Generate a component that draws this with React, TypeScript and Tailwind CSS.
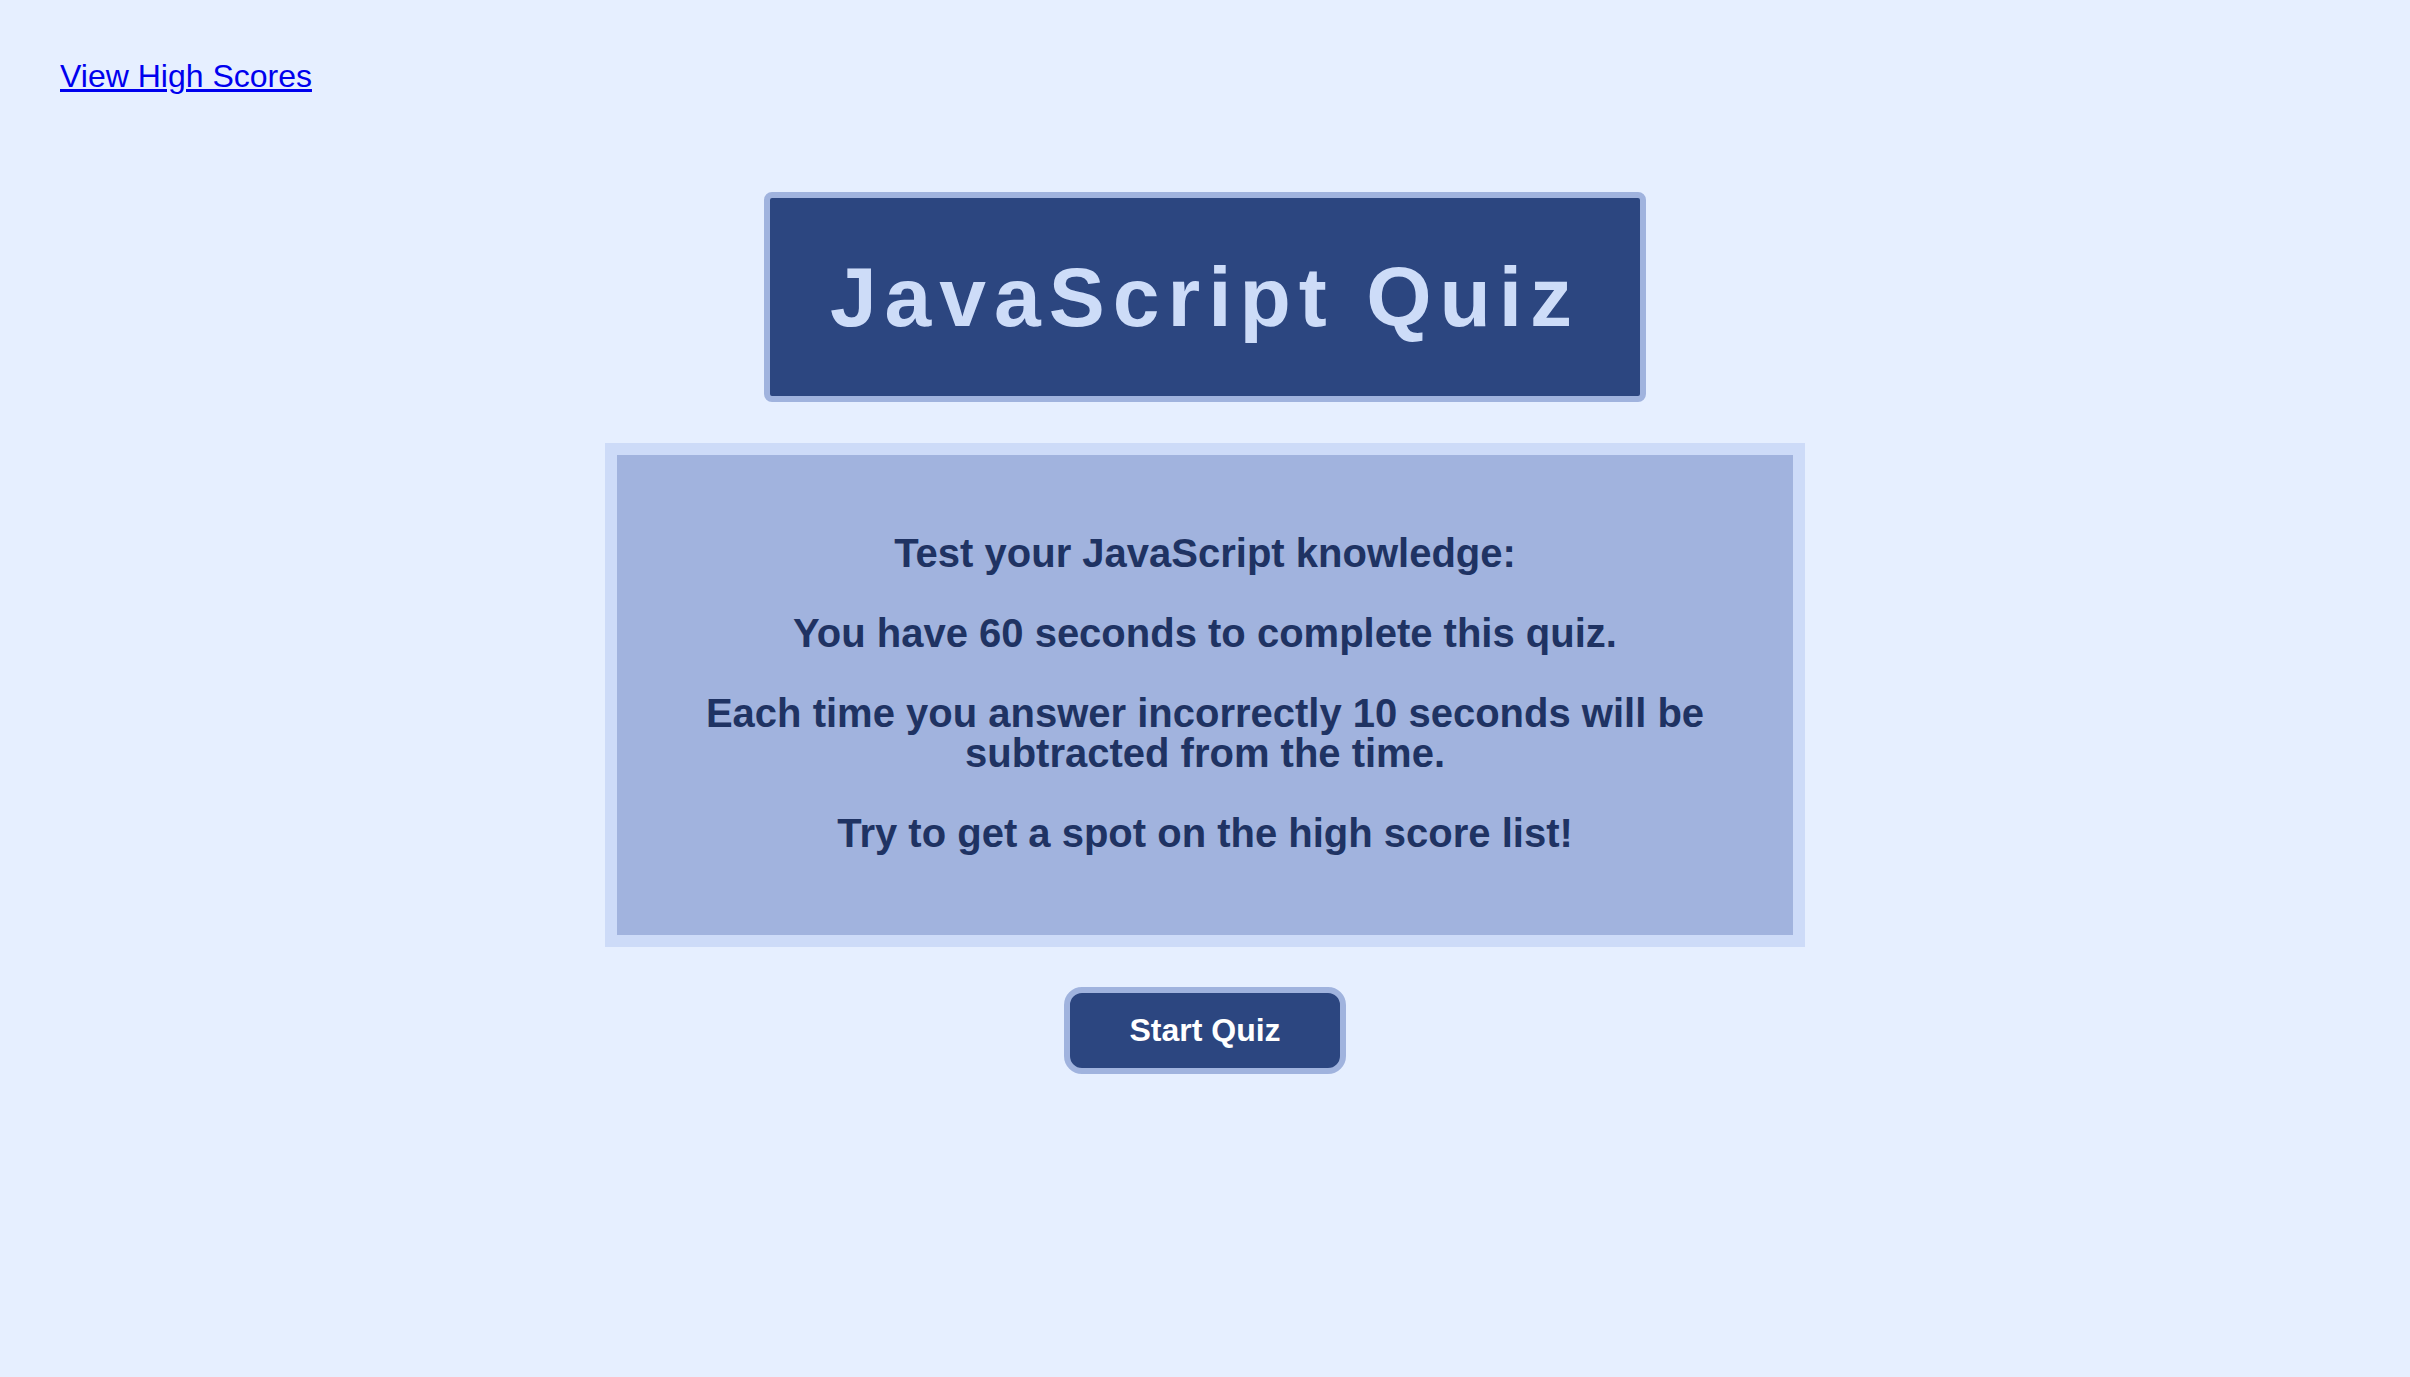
const paragraphs = [
  'Test your JavaScript knowledge:',
  'You have 60 seconds to complete this quiz.',
  'Each time you answer incorrectly 10 seconds will be subtracted from the time.',
  'Try to get a spot on the high score list!',
];

export default function App() {
  return (
    <div className="min-h-screen bg-[#e6efff] font-['Liberation_Sans',Arial,sans-serif]">
      <header className="pl-[60px] pt-[58px]">
        <a href="#" className="text-[32px] leading-[1.15] text-[#0000ee] underline">
          View High Scores
        </a>
      </header>

      <main className="flex flex-col items-center pt-[97px]">
        <h1 className="rounded-[8px] border-[6px] border-[#a0b3de] bg-[#2c4680] px-[60px] py-[51px] text-[84px] leading-[1.15] font-bold tracking-[8px] text-[#cddcf8]">
          JavaScript Quiz
        </h1>

        <section className="mt-[41px] w-[1200px] border-[12px] border-[#cddbf8] bg-[#a1b3de] px-[40px] pt-[78px] pb-[82px] text-center">
          <div className="flex flex-col gap-[40px]">
            {paragraphs.map((text) => (
              <p key={text} className="text-[40px] leading-[40px] font-bold text-[#1f3363]">
                {text}
              </p>
            ))}
          </div>
        </section>

        <button
          type="button"
          className="mt-[40px] rounded-[18px] border-[6px] border-[#a0b3de] bg-[#2c4680] px-[59px] py-[19px] text-[32px] leading-[1.15] font-bold text-white"
        >
          Start Quiz
        </button>
      </main>
    </div>
  );
}
